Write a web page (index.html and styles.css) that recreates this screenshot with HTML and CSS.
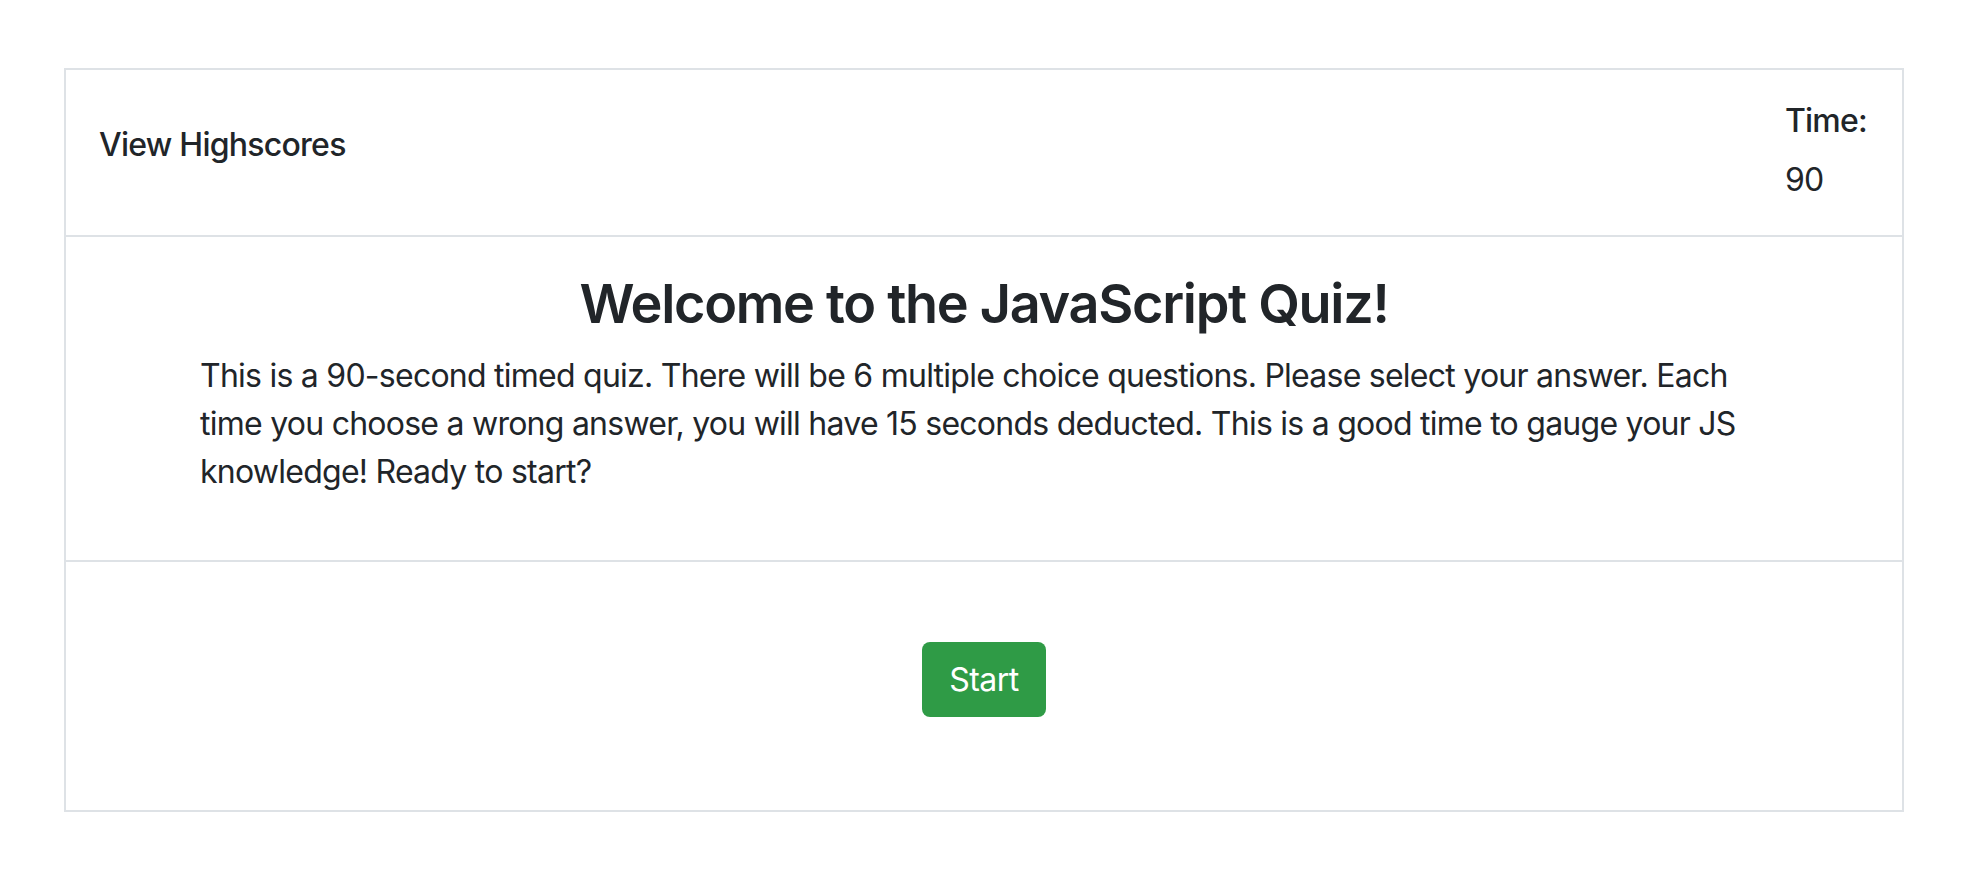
FILE: index.html
```html
<!DOCTYPE html>
<html lang="en">
<head>
<meta charset="utf-8">
<title>JavaScript Quiz</title>
<link rel="stylesheet" href="styles.css">
</head>
<body>
<div class="quiz-card">
  <header class="quiz-header">
    <div class="highscores">View Highscores</div>
    <div class="timer">
      <div class="timer-label">Time:</div>
      <div class="timer-value">90</div>
    </div>
  </header>
  <section class="intro">
    <h3 class="intro-title">Welcome to the JavaScript Quiz!</h3>
    <p class="intro-text">This is a 90-second timed quiz. There will be 6 multiple choice questions. Please select your answer. Each time you choose a wrong answer, you will have 15 seconds deducted. This is a good time to gauge your JS knowledge! Ready to start?</p>
  </section>
  <section class="actions">
    <button class="start-btn" type="button">Start</button>
  </section>
</div>
</body>
</html>
```

FILE: styles.css
```css
html, body {
  margin: 0;
  padding: 0;
  background: #ffffff;
}

body {
  font-family: Inter, "Noto Sans", "Liberation Sans", sans-serif;
  font-size: 32px;
  line-height: 48px;
  letter-spacing: -0.75px;
  color: #212529;
}

.quiz-card {
  box-sizing: border-box;
  width: 1840px;
  margin: 68px 0 0 64px;
  border: 2px solid #dee2e6;
}

.quiz-header {
  box-sizing: border-box;
  height: 167px;
  display: flex;
  justify-content: space-between;
  align-items: flex-start;
  padding: 0 35px 0 33px;
  border-bottom: 2px solid #dee2e6;
}

.highscores {
  margin-top: 51px;
  font-weight: 500;
}

.timer {
  margin-top: 27px;
}

.timer-label {
  font-weight: 500;
}

.timer-value {
  margin-top: 11px;
  font-weight: 400;
}

.intro {
  box-sizing: border-box;
  height: 325px;
  padding-top: 33px;
  border-bottom: 2px solid #dee2e6;
}

.intro-title {
  margin: 0 0 15px;
  text-align: center;
  font-size: 54px;
  line-height: 67px;
  letter-spacing: -1.3px;
  font-weight: 600;
}

.intro-text {
  width: 1568px;
  margin: 0 auto;
}

.actions {
  box-sizing: border-box;
  height: 248px;
  display: flex;
  justify-content: center;
  align-items: flex-start;
  padding-top: 80px;
}

.start-btn {
  width: 124px;
  height: 75px;
  padding: 0;
  border: none;
  border-radius: 8px;
  background: #2f9b46;
  color: #ffffff;
  font-family: inherit;
  font-size: 32px;
  line-height: 76px;
  letter-spacing: -0.5px;
  font-weight: 400;
  cursor: pointer;
}
```
